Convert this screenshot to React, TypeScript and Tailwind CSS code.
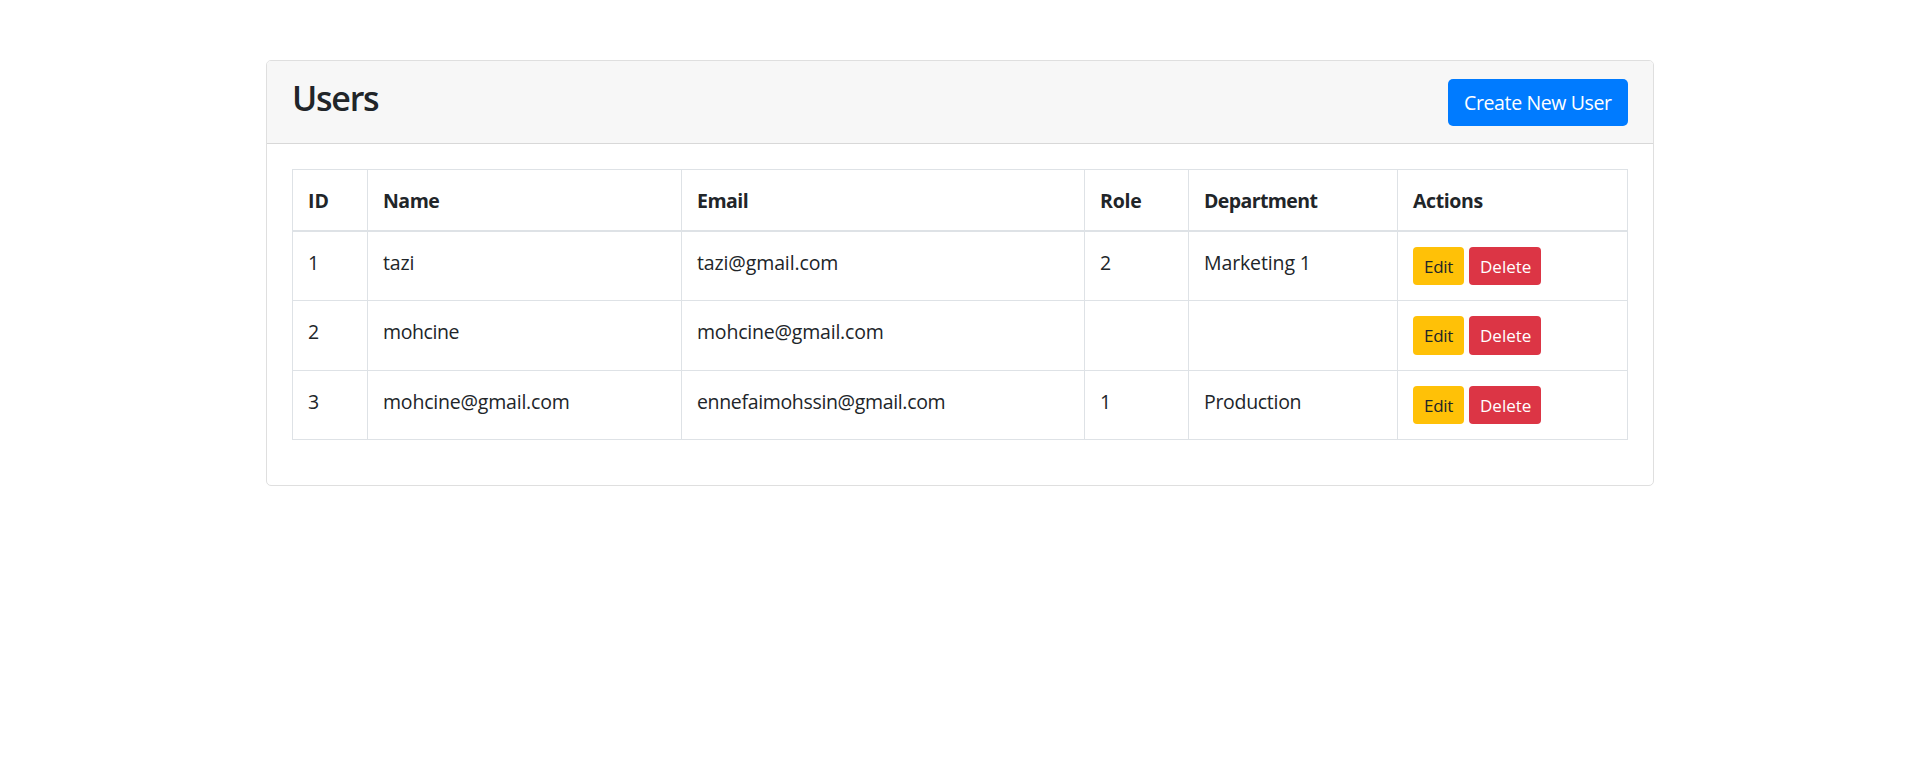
import React from "react";

type Cell = { text: string; tracking?: string };

type User = {
  id: Cell;
  name: Cell;
  email: Cell;
  role: Cell;
  department: Cell;
};

const columns: (Cell & { width: string })[] = [
  { text: "ID", width: "w-[75px]" },
  { text: "Name", width: "w-[314px]", tracking: "tracking-[-0.5px]" },
  { text: "Email", width: "w-[403px]", tracking: "tracking-[-0.5px]" },
  { text: "Role", width: "w-[104px]", tracking: "tracking-[-0.2px]" },
  { text: "Department", width: "w-[209px]", tracking: "tracking-[-0.6px]" },
  { text: "Actions", width: "w-[230px]", tracking: "tracking-[-0.4px]" },
];

const users: User[] = [
  {
    id: { text: "1" },
    name: { text: "tazi", tracking: "tracking-[-0.17px]" },
    email: { text: "tazi@gmail.com", tracking: "tracking-[-0.12px]" },
    role: { text: "2" },
    department: { text: "Marketing 1", tracking: "tracking-[-0.12px]" },
  },
  {
    id: { text: "2" },
    name: { text: "mohcine", tracking: "tracking-[-0.4px]" },
    email: { text: "mohcine@gmail.com", tracking: "tracking-[-0.2px]" },
    role: { text: "" },
    department: { text: "" },
  },
  {
    id: { text: "3" },
    name: { text: "mohcine@gmail.com", tracking: "tracking-[-0.2px]" },
    email: { text: "ennefaimohssin@gmail.com", tracking: "tracking-[-0.34px]" },
    role: { text: "1" },
    department: { text: "Production", tracking: "tracking-[-0.3px]" },
  },
];

const rowHeights = ["h-[69px]", "h-[70px]", "h-[69px]"];
const buttonHeights = ["h-[38px]", "h-[39px]", "h-[38px]"];

function UserRow({ user, index }: { user: User; index: number }) {
  const cells = [user.id, user.name, user.email, user.role, user.department];
  const button = `${buttonHeights[index]} flex items-start rounded pt-[7px] pl-[11px] text-[17px] leading-[26px]`;
  return (
    <tr className={rowHeights[index]}>
      {cells.map((cell, i) => (
        <td key={i} className={`border-r border-b border-[#dee2e6] px-[15px] pt-4 pb-0 align-top ${cell.tracking ?? ""}`}>
          {cell.text}
        </td>
      ))}
      <td className="border-r border-b border-[#dee2e6] px-[15px] pt-[15px] pb-0 align-top">
        <div className="flex items-start gap-[5px]">
          <button className={`${button} w-[51px] bg-[#ffc107] tracking-[-0.3px] text-[#212529]`}>Edit</button>
          <button className={`${button} w-[72px] bg-[#dc3545] text-white`}>Delete</button>
        </div>
      </td>
    </tr>
  );
}

export default function App() {
  return (
    <div className="min-h-[767px] bg-white pt-[60px] pl-[266px] font-['Open_Sans','Noto_Sans',sans-serif] text-[19.5px] leading-[30px] text-[#212529]">
      <div className="h-[426px] w-[1388px] rounded-[5px] border border-[#dfdfdf]">
        <div className="flex h-[83px] items-start justify-between rounded-t-[4px] border-b border-[#d8d8d8] bg-[#f7f7f7] px-[25px]">
          <h2 className="mt-4 text-[34px] leading-[42px] font-semibold tracking-[-1.25px]">Users</h2>
          <button className="mt-[18px] flex h-[47px] w-[180px] items-center rounded-[5px] bg-[#007bff] pl-4 tracking-[-0.37px] whitespace-nowrap text-white">
            Create New User
          </button>
        </div>
        <div className="px-[25px] pt-[25px]">
          <table className="w-[1336px] table-fixed border-separate border-spacing-0 border-t border-l border-[#dee2e6]">
            <thead>
              <tr className="h-[62px]">
                {columns.map((column) => (
                  <th
                    key={column.text}
                    className={`${column.width} border-r border-b-2 border-[#dee2e6] px-[15px] pt-4 pb-0 text-left align-top font-bold ${column.tracking ?? ""}`}
                  >
                    {column.text}
                  </th>
                ))}
              </tr>
            </thead>
            <tbody>
              {users.map((user, i) => (
                <UserRow key={user.id.text} user={user} index={i} />
              ))}
            </tbody>
          </table>
        </div>
      </div>
    </div>
  );
}
